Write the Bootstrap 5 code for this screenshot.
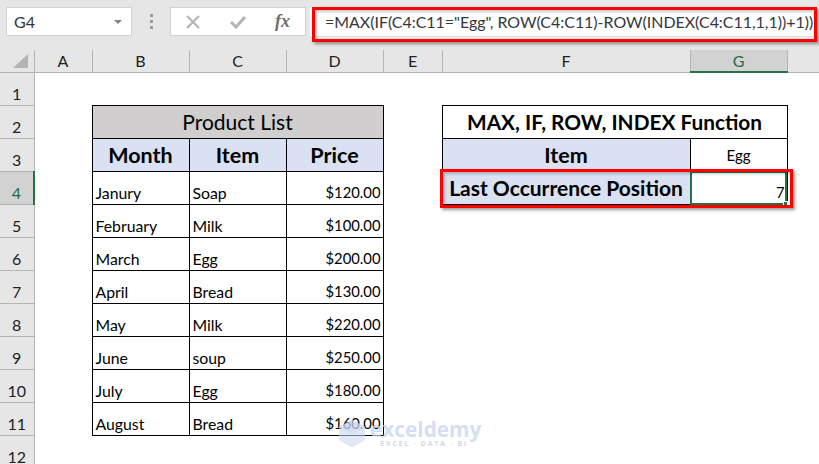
<!DOCTYPE html>
<html lang="en"><head><meta charset="utf-8"><title>Excel</title>
<link href="https://cdn.jsdelivr.net/npm/bootstrap@5.3.0/dist/css/bootstrap.min.css" rel="stylesheet">
<style>
html,body{margin:0;width:819px;height:464px;overflow:hidden;background:#fff}
body{font-family:Lato,"Open Sans",sans-serif;color:#000;position:relative}
.topbar{height:50px;background:#e6e6e6;padding:7px 0 0 6px}
.namebox{width:126px;height:29px;background:#fff;border:1px solid #d2d2d2;font-size:16px;padding:0 0 0 7px;color:#333}
.caret{width:0;height:0;border-left:4px solid transparent;border-right:4px solid transparent;border-top:4px solid #808080;margin-right:9px}
.dots{width:38px;height:29px;gap:3px}
.dots i{display:block;width:3px;height:3px;background:#9c9c9c}
.fxbox{width:136px;height:29px;background:#fff;border:1px solid #d2d2d2;padding:0 15px 0 14px}
.fxtxt{font:italic bold 18px "Liberation Serif",serif;color:#6e6e6e}
.formula{width:509px;height:29px;margin-left:4px;background:#fff;font:15.95px/30px Lato,sans-serif;padding-left:15px;white-space:nowrap;color:#33373d}
.sheet{border-collapse:collapse;table-layout:fixed;width:819px}
.sheet td,.sheet th{padding:0;font-weight:400}
.hrow{height:22px}
.hrow th{background:#e6e6e6;text-align:center;font:16px Lato,sans-serif;color:#222;border-right:1px solid #b4b4b4;border-bottom:1px solid #b4b4b4;vertical-align:middle}
.hrow .sel{background:#d2d2d2;color:#1f6b43;border-bottom:2px solid #217346}
.hrow .nob{border-right:0}
.grow{height:33px}
.rh{background:#e6e6e6;text-align:center!important;font:16px Lato,sans-serif!important;color:#222;border-right:1px solid #b4b4b4;border-bottom:1px solid #b4b4b4;vertical-align:bottom;padding-bottom:2px!important}
.rh.sel{background:#d2d2d2;color:#1f6b43;border-right:2px solid #217346}
.bx{border:1.5px solid #000;font-size:15.8px;vertical-align:bottom;padding:0 3px 2px 3px!important;line-height:19px}
.ttl{background:#d0cece;text-align:center;font-size:21px;vertical-align:middle;padding:0!important}
.hd{background:#d9e1f2;text-align:center;font-size:21.5px;font-weight:700!important;vertical-align:middle;padding:2px 0 0!important}
.ttl2{text-align:center;font-size:20.8px;font-weight:700!important;vertical-align:middle;padding:0!important}
.lbl{background:#d9e1f2;text-align:center;font-size:21px;font-weight:700!important;vertical-align:middle;padding:0!important;white-space:nowrap}
.mid{text-align:center;vertical-align:middle;padding:2px 0 0!important;font-size:15px}
.end{text-align:right;font-size:14.8px;padding-right:2px!important}
.redbox{position:absolute;border:3.5px solid #ff0000;box-shadow:2px 2px 3px rgba(0,0,0,.4),inset 2px 2px 3px rgba(0,0,0,.22);pointer-events:none}
.rb1{left:312px;top:7px;width:505px;height:35px}
.rb2{left:440px;top:169px;width:353px;height:39px}
.cellsel{position:absolute;left:690px;top:171px;width:97px;height:34px;border:2px solid #217346;pointer-events:none}
.cellsel i{position:absolute;right:-3px;bottom:-3px;width:5px;height:5px;background:#217346;border:1px solid #fff}
.wm{position:absolute;left:338px;top:418px;gap:4px;pointer-events:none}
.wmname{font:700 20.8px/20px "Open Sans",sans-serif;color:rgba(200,213,243,.8)}
.wmsub{font:700 7.5px/9px "Open Sans",sans-serif;color:rgba(205,210,228,.85);letter-spacing:1.5px;padding-left:10px}
</style></head><body>
<div class="topbar d-flex align-items-start">
 <div class="namebox d-flex align-items-center justify-content-between"><span>G4</span><span class="caret"></span></div>
 <div class="dots d-flex flex-column align-items-center justify-content-center"><i></i><i></i><i></i></div>
 <div class="fxbox d-flex align-items-center justify-content-between">
  <svg width="16" height="16" viewBox="0 0 16 16"><path d="M2 2 14 14M14 2 2 14" stroke="#b4b4b4" stroke-width="2" fill="none"/></svg>
  <svg width="18" height="16" viewBox="0 0 18 16" class="mx-3"><path d="M2 8 7 13 16 3" stroke="#b4b4b4" stroke-width="3" fill="none"/></svg>
  <span class="fxtxt">fx</span>
 </div>
 <div class="formula">=MAX(IF(C4:C11="Egg", ROW(C4:C11)-ROW(INDEX(C4:C11,1,1))+1))</div>
</div>
<table class="sheet">
<colgroup><col style="width:34px"><col style="width:58px"><col style="width:97px"><col style="width:97px"><col style="width:97px"><col style="width:59px"><col style="width:248px"><col style="width:97px"><col></colgroup>
<tr class="hrow"><th><svg width="18" height="16" viewBox="0 0 18 16" class="d-block ms-auto me-1"><path d="M16 1V15H1Z" fill="#b4b4b4"/></svg></th><th>A</th><th>B</th><th>C</th><th>D</th><th>E</th><th>F</th><th class="sel">G</th><th class="nob"></th></tr>
<tr class="grow"><td class="rh">1</td><td colspan="8"></td></tr>
<tr class="grow"><td class="rh">2</td><td></td><td class="bx ttl" colspan="3">Product List</td><td></td><td class="bx ttl2" colspan="2">MAX, IF, ROW, INDEX Function</td><td></td></tr>
<tr class="grow"><td class="rh">3</td><td></td><td class="bx hd">Month</td><td class="bx hd">Item</td><td class="bx hd">Price</td><td></td><td class="bx hd">Item</td><td class="bx mid">Egg</td><td></td></tr>
<tr class="grow"><td class="rh sel">4</td><td></td><td class="bx">Janury</td><td class="bx">Soap</td><td class="bx end">$120.00</td><td></td><td class="bx lbl">Last Occurrence Position</td><td class="bx end">7</td><td></td></tr>
<tr class="grow"><td class="rh">5</td><td></td><td class="bx">February</td><td class="bx">Milk</td><td class="bx end">$100.00</td><td colspan="4"></td></tr>
<tr class="grow"><td class="rh">6</td><td></td><td class="bx">March</td><td class="bx">Egg</td><td class="bx end">$200.00</td><td colspan="4"></td></tr>
<tr class="grow"><td class="rh">7</td><td></td><td class="bx">April</td><td class="bx">Bread</td><td class="bx end">$130.00</td><td colspan="4"></td></tr>
<tr class="grow"><td class="rh">8</td><td></td><td class="bx">May</td><td class="bx">Milk</td><td class="bx end">$220.00</td><td colspan="4"></td></tr>
<tr class="grow"><td class="rh">9</td><td></td><td class="bx">June</td><td class="bx">soup</td><td class="bx end">$250.00</td><td colspan="4"></td></tr>
<tr class="grow"><td class="rh">10</td><td></td><td class="bx">July</td><td class="bx">Egg</td><td class="bx end">$180.00</td><td colspan="4"></td></tr>
<tr class="grow"><td class="rh">11</td><td></td><td class="bx">August</td><td class="bx">Bread</td><td class="bx end">$160.00</td><td colspan="4"></td></tr>
<tr class="grow"><td class="rh">12</td><td colspan="8"></td></tr>
</table>
<div class="cellsel"><i></i></div>
<div class="redbox rb1"></div>
<div class="redbox rb2"></div>
<div class="wm d-flex align-items-center">
 <svg width="28" height="31" viewBox="0 0 30 32"><path d="M15 1 29 9V23L15 31 1 23V9Z" fill="rgba(200,213,243,.55)"/><path d="M15 1 29 9 15 17 1 9Z" fill="rgba(200,213,243,.45)"/></svg>
 <div><div class="wmname">exceldemy</div><div class="wmsub">EXCEL · DATA · BI</div></div>
</div>
</body></html>
